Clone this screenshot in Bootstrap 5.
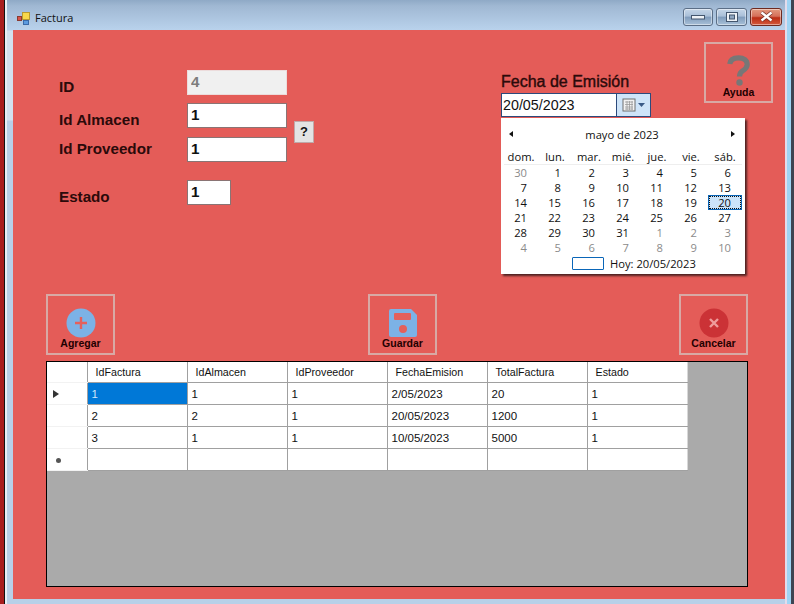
<!DOCTYPE html>
<html lang="es">
<head>
<meta charset="utf-8">
<title>Factura</title>
<link href="https://cdn.jsdelivr.net/npm/bootstrap@5.3.0/dist/css/bootstrap.min.css" rel="stylesheet">
<style>
html,body{margin:0;padding:0;width:794px;height:604px;overflow:hidden;background:#b8d0e8;}
body{font-family:"Liberation Sans",Arial,sans-serif;color:#111;}
.wf-win{width:794px;height:604px;padding:0 9px 5px 13px;
 background:
  linear-gradient(90deg,#a81e1e 0 4px,#111 4px 5.5px,#e8eef5 5.5px 7px,transparent 7px) left top/13px 100% no-repeat,
  linear-gradient(90deg,#e2dcec 0 2px,#9fd4f4 2px 6px,#3d4552 6px 9px) right top/9px 100% no-repeat,
  linear-gradient(180deg,#8fa9c6 0,#a0b8d3 6px,#b9d2ec 30px,#d3e1ef 31px,#d3e1ef 120px,#b8d0e8 121px);}
.wf-title{height:30px;margin-left:-13px;padding:6px 3px 0 17px;}
.wf-title-text{font-family:"Open Sans",sans-serif;font-size:11px;margin-left:5px;color:#111;}
.wf-btns{column-gap:3px;margin-top:-3px;}
.wf-winbtn{width:30px;height:18px;border:1px solid #5b6e86;border-radius:3px;box-shadow:inset 0 0 0 1px rgba(255,255,255,.45);
 background:linear-gradient(180deg,#c6d6e8 0,#a9bfd8 45%,#7f9bbb 50%,#a8c0d8 100%);}
.wf-winbtn.wf-mx{width:31px;}
.wf-winbtn.wf-x{width:32px;border-color:#6e2a20;background:linear-gradient(180deg,#e29a80 0,#d6705a 45%,#bb2d15 55%,#d4593c 100%);}
.wf-client{height:569px;width:772px;background:#e45c58;padding:0;}
.wf-top{height:264px;position:relative;}
.wf-form{width:488px;padding:40px 0 0 46px;display:grid;grid-template-columns:128px 100px 7px 20px;grid-template-rows:25px 25px 25px 25px;align-items:start;}
.wf-lbl{font-weight:700;font-size:15.2px;line-height:18px;color:#2b0a0a;margin:0;grid-column:1;white-space:nowrap;}
.wf-l1{margin-top:8px;grid-row:1;}
.wf-l2{margin-top:16px;grid-row:2;}
.wf-l3{margin-top:20px;grid-row:3;}
.wf-l4{margin-top:43px;grid-row:4;}
.wf-in{display:block;height:25px;border:1px solid #8a7474;border-radius:0;padding:0 0 3px 3px;font-family:"Liberation Sans",sans-serif;font-weight:700;font-size:15.2px;line-height:20px;color:#111;background:#fff;box-shadow:none;}
.wf-i1{grid-row:1;grid-column:2;}
.wf-i1:disabled{background:#f0f0f0;border-color:#ecdcdc;color:#7d7d7d;opacity:1;}
.wf-i2{grid-row:2;grid-column:2;margin-top:8px;}
.wf-i3{grid-row:3;grid-column:2;margin-top:17px;}
.wf-i4{grid-row:4;grid-column:2;margin-top:35px;width:44px;}
.wf-q{grid-row:2;grid-column:4;margin-top:26px;width:20px;height:22px;padding:0;border:1px solid #bfa9a9;border-radius:0;background:#e3e3e3;font-weight:700;font-size:13px;line-height:18px;color:#111;}
.wf-datecol{width:203px;padding-top:42px;}
.wf-dlbl{font-size:16px;line-height:19px;margin-bottom:2px;color:#2b0a0a;-webkit-text-stroke:.4px #2b0a0a;white-space:nowrap;}
.wf-date{width:150px;height:24px;border:1px solid #2c4a7c;background:#fff;}
.wf-date span{font-size:14.3px;line-height:22px;padding-left:1px;color:#111;}
.wf-drop{width:34px;background:#cfe4f8;border-left:1px solid #2c4a7c;}
.wf-tool{width:69px;height:61px;border:2px solid #d8a9a5;border-radius:0;background:transparent;padding:0;display:flex;flex-direction:column;align-items:center;color:#200;font-weight:700;font-size:10.5px;line-height:12px;}
.wf-tool:hover{background:transparent;}
.wf-ayuda{margin-top:12px;}
.wf-ayuda svg{margin-top:11px;}
.wf-bar{padding-left:33px;}
.wf-tool svg.wf-big{margin-top:12px;margin-bottom:-1px;}
.wf-m1{margin-left:253px;}
.wf-m2{margin-left:242px;}
.wf-cal{position:absolute;left:488px;top:88px;width:244px;height:156px;background:#fff;box-shadow:2px 2px 2px rgba(40,20,20,.8);font-family:"Open Sans",sans-serif;font-size:11.2px;line-height:15px;color:#111;padding:0 3px;z-index:3;}
.wf-calhead{height:31px;padding:1px 7px 0 5px;}
.wf-tri-l,.wf-tri-r{width:0;height:0;border-top:3.5px solid transparent;border-bottom:3.5px solid transparent;}
.wf-tri-l{border-right:4px solid #111;}
.wf-tri-r{border-left:4px solid #111;}
.wf-days{display:grid;grid-template-columns:repeat(7,34px);grid-template-rows:16px;grid-auto-rows:15px;}
.wf-days>div{text-align:right;padding-right:11px;}
.wf-days>.wf-dh{text-align:center;padding:0;border-bottom:1px solid #eee;}
.wf-off{color:#8b8b8b;}
.wf-sel{background:#cbe4fa;outline:1px dotted #111;outline-offset:-2px;border:1px solid #0a66b8;padding-right:10px!important;line-height:13px;}
.wf-today{height:17px;gap:6px;padding-left:68px;}
.wf-tbox{width:32px;height:13px;border:1px solid #0a66b8;border-radius:1px;}
.wf-grid{margin:6px 0 0 33px;width:702px;height:226px;border:1px solid #000;border-width:1px 1px 1.5px 1px;background:#aaa;}
.wf-table{width:640px;table-layout:fixed;border-collapse:collapse;margin:0;font-size:11.5px;color:#111;background:#fff;}
.wf-table th,.wf-table td{border:0;border-right:1px solid #a0a0a0;border-bottom:1px solid #a0a0a0;padding:3px 0 0 4px;height:22px;font-weight:400;vertical-align:middle;white-space:nowrap;overflow:hidden;background:#fff;}
.wf-table thead th{height:20px;padding:1px 0 0 8px;font-size:10.7px;}
.wf-table tr>.wf-rh{border-bottom-color:#f2f2f2;padding:0;}
.wf-table thead th:last-child,.wf-table td:last-child{border-right:1px solid #d8d8d8;}
.wf-table tbody td.wf-cur{background:#0078d7;color:#cfe6fb;}
.wf-rowtri{display:block;width:0;height:0;margin:2px 0 0 6px;border-top:4px solid transparent;border-bottom:4px solid transparent;border-left:6px solid #333;}
.wf-star{display:block;width:5px;height:5px;border-radius:50%;background:#555;margin-left:9px;margin-top:3px;}
</style>
</head>
<body>
<div class="wf-win">
  <div class="wf-title d-flex align-items-center">
    <svg width="13" height="13" viewBox="0 0 13 13"><rect x="0.5" y="4.5" width="4" height="4" fill="#d9534a" stroke="#8a3a30"/><rect x="5.5" y="0.5" width="7" height="7" fill="#f8d84a" stroke="#b89a30"/><rect x="6.5" y="8.5" width="5" height="4" fill="#5b9be0" stroke="#3a6aa8"/></svg>
    <span class="wf-title-text">Factura</span>
    <div class="ms-auto d-flex wf-btns">
      <div class="wf-winbtn d-flex align-items-center justify-content-center"><svg width="14" height="6" viewBox="0 0 14 6"><rect x=".5" y="1.5" width="13" height="3.5" fill="#eef2f7" stroke="#44566e"/></svg></div>
      <div class="wf-winbtn wf-mx d-flex align-items-center justify-content-center"><svg width="12" height="10" viewBox="0 0 12 10"><rect x=".5" y=".5" width="11" height="9" fill="#eef2f7" stroke="#44566e"/><rect x="3.500" y="3" width="5" height="4" fill="#8fa6c0" stroke="#44566e"/></svg></div>
      <div class="wf-winbtn wf-x d-flex align-items-center justify-content-center"><svg width="15" height="11" viewBox="0 0 15 11"><path d="M2.500 1.500 7.500 5.500 12.500 1.500M2.500 9.500 7.500 5.500 12.500 9.500" fill="none" stroke="#6a2a20" stroke-width="3.600"/><path d="M2.500 1.500 7.500 5.500 12.500 1.500M2.500 9.500 7.500 5.500 12.500 9.500" fill="none" stroke="#fff" stroke-width="2.400"/></svg></div>
    </div>
  </div>
  <div class="wf-client">
    <div class="wf-top d-flex">
      <div class="wf-form">
        <label class="wf-lbl wf-l1">ID</label>
        <input class="form-control wf-in wf-i1" value="4" disabled>
        <label class="wf-lbl wf-l2">Id Almacen</label>
        <input class="form-control wf-in wf-i2" value="1">
        <button class="btn wf-q" type="button">?</button>
        <label class="wf-lbl wf-l3">Id Proveedor</label>
        <input class="form-control wf-in wf-i3" value="1">
        <label class="wf-lbl wf-l4">Estado</label>
        <input class="form-control wf-in wf-i4" value="1">
      </div>
      <div class="wf-datecol">
        <div class="wf-dlbl">Fecha de Emisión</div>
        <div class="wf-date d-flex justify-content-between">
          <span>20/05/2023</span>
          <div class="wf-drop d-flex align-items-center justify-content-center">
            <svg width="23" height="14" viewBox="0 0 23 14"><rect x="1" y="1" width="12" height="12" fill="#f2f2f2" stroke="#6f6f6f"/><path d="M3 4h8M3 6.500h8M3 9h8M3 11h8M5 3v9M7.500 3v9M10 3v9" stroke="#9a9a9a" stroke-width=".8"/><path d="M16 5h7l-3.500 4z" fill="#3a5a86"/></svg>
          </div>
        </div>
      </div>
      <button class="btn wf-tool wf-ayuda" type="button">
        <svg width="23" height="31" viewBox="0 0 23 31"><path d="M2.800 9C3.200 4.200 6.800 2.800 11.500 2.800c5.300 0 8.700 2.600 8.700 6.700 0 3.400-2.300 4.900-4.600 6.400-2.100 1.400-3.100 2.600-3.100 5.600" fill="none" stroke="#777" stroke-width="5.200"/><circle cx="12.500" cy="27.500" r="3.200" fill="#777"/></svg>
        <span>Ayuda</span>
      </button>
      <div class="wf-cal">
        <div class="wf-calhead d-flex align-items-center justify-content-between">
          <span class="wf-tri-l"></span><span>mayo de 2023</span><span class="wf-tri-r"></span>
        </div>
        <div class="wf-days">
          <div class="wf-dh">dom.</div><div class="wf-dh">lun.</div><div class="wf-dh">mar.</div><div class="wf-dh">mié.</div><div class="wf-dh">jue.</div><div class="wf-dh">vie.</div><div class="wf-dh">sáb.</div>
          <div class="wf-off">30</div><div>1</div><div>2</div><div>3</div><div>4</div><div>5</div><div>6</div>
          <div>7</div><div>8</div><div>9</div><div>10</div><div>11</div><div>12</div><div>13</div>
          <div>14</div><div>15</div><div>16</div><div>17</div><div>18</div><div>19</div><div class="wf-sel">20</div>
          <div>21</div><div>22</div><div>23</div><div>24</div><div>25</div><div>26</div><div>27</div>
          <div>28</div><div>29</div><div>30</div><div>31</div><div class="wf-off">1</div><div class="wf-off">2</div><div class="wf-off">3</div>
          <div class="wf-off">4</div><div class="wf-off">5</div><div class="wf-off">6</div><div class="wf-off">7</div><div class="wf-off">8</div><div class="wf-off">9</div><div class="wf-off">10</div>
        </div>
        <div class="wf-today d-flex align-items-center"><span class="wf-tbox"></span><span>Hoy: 20/05/2023</span></div>
      </div>
    </div>
    <div class="wf-bar d-flex">
      <button class="btn wf-tool" type="button">
        <svg class="wf-big" width="30" height="30" viewBox="0 0 30 30"><circle cx="15" cy="15" r="14.500" fill="#7cb2e6"/><path d="M15 9v12M9 15h12" stroke="#e4605c" stroke-width="2.400"/></svg>
        <span>Agregar</span>
      </button>
      <button class="btn wf-tool wf-m1" type="button">
        <svg class="wf-big" width="30" height="30" viewBox="0 0 30 30"><path d="M3 1h20l6 6v20a2 2 0 0 1-2 2H3a2 2 0 0 1-2-2V3a2 2 0 0 1 2-2z" fill="#7cb2e6"/><rect x="6" y="5" width="17" height="7" rx="1" fill="#e4605c"/><circle cx="15" cy="21" r="4" fill="#e4605c"/></svg>
        <span>Guardar</span>
      </button>
      <button class="btn wf-tool wf-m2" type="button">
        <svg class="wf-big" width="30" height="30" viewBox="0 0 30 30"><circle cx="15" cy="15" r="14.500" fill="#cb3236"/><path d="M11 11l8 8M19 11l-8 8" stroke="#ee9c9c" stroke-width="2.400"/></svg>
        <span>Cancelar</span>
      </button>
    </div>
    <div class="wf-grid">
      <table class="wf-table">
        <colgroup><col style="width:40px"><col style="width:100px"><col style="width:100px"><col style="width:100px"><col style="width:100px"><col style="width:100px"><col style="width:100px"></colgroup>
        <thead><tr><th class="wf-rh"></th><th>IdFactura</th><th>IdAlmacen</th><th>IdProveedor</th><th>FechaEmision</th><th>TotalFactura</th><th>Estado</th></tr></thead>
        <tbody>
          <tr><td class="wf-rh"><span class="wf-rowtri"></span></td><td class="wf-cur">1</td><td>1</td><td>1</td><td>2/05/2023</td><td>20</td><td>1</td></tr>
          <tr><td class="wf-rh"></td><td>2</td><td>2</td><td>1</td><td>20/05/2023</td><td>1200</td><td>1</td></tr>
          <tr><td class="wf-rh"></td><td>3</td><td>1</td><td>1</td><td>10/05/2023</td><td>5000</td><td>1</td></tr>
          <tr><td class="wf-rh"><span class="wf-star"></span></td><td></td><td></td><td></td><td></td><td></td><td></td></tr>
        </tbody>
      </table>
    </div>
  </div>
</div>
<script src="https://cdn.jsdelivr.net/npm/bootstrap@5.3.0/dist/js/bootstrap.bundle.min.js"></script>
</body>
</html>
